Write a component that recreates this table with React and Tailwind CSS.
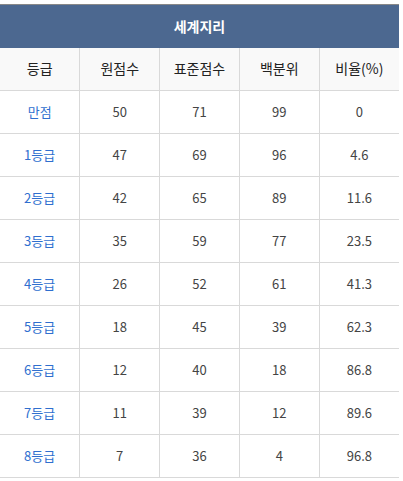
const rows = [
  ['만점', 50, 71, 99, '0'],
  ['1등급', 47, 69, 96, '4.6'],
  ['2등급', 42, 65, 89, '11.6'],
  ['3등급', 35, 59, 77, '23.5'],
  ['4등급', 26, 52, 61, '41.3'],
  ['5등급', 18, 45, 39, '62.3'],
  ['6등급', 12, 40, 18, '86.8'],
  ['7등급', 11, 39, 12, '89.6'],
  ['8등급', 7, 36, 4, '96.8'],
]

const heads = ['등급', '원점수', '표준점수', '백분위', '비율(%)']

export default function App() {
  return (
    <div className="bg-white w-[403px] h-[481px] pt-[4px] pr-[4px] font-['Noto_Sans_CJK_KR','Noto_Sans',sans-serif]">
      <table className="w-[399px] border-collapse table-fixed text-center">
        <thead>
          <tr>
            <th colSpan={5} className="h-[43px] bg-[#4c6890] border-t border-[#888] text-white text-[14px] font-bold">
              세계지리
            </th>
          </tr>
          <tr className="bg-[#f9f9f9]">
            {heads.map((h, i) => (
              <th
                key={h}
                className={`h-[43px] w-[80px] font-normal text-[14px] text-[#222] border-b border-[#d9d9d9] ${i > 0 ? 'border-l' : ''}`}
              >
                {h}
              </th>
            ))}
          </tr>
        </thead>
        <tbody>
          {rows.map((r) => (
            <tr key={r[0]}>
              {r.map((c, i) => (
                <td
                  key={i}
                  className={`h-[43px] text-[13px] border-b border-[#d9d9d9] ${i === 0 ? 'text-[#2f6fcf]' : 'border-l text-[#444]'}`}
                >
                  {c}
                </td>
              ))}
            </tr>
          ))}
        </tbody>
      </table>
    </div>
  )
}
